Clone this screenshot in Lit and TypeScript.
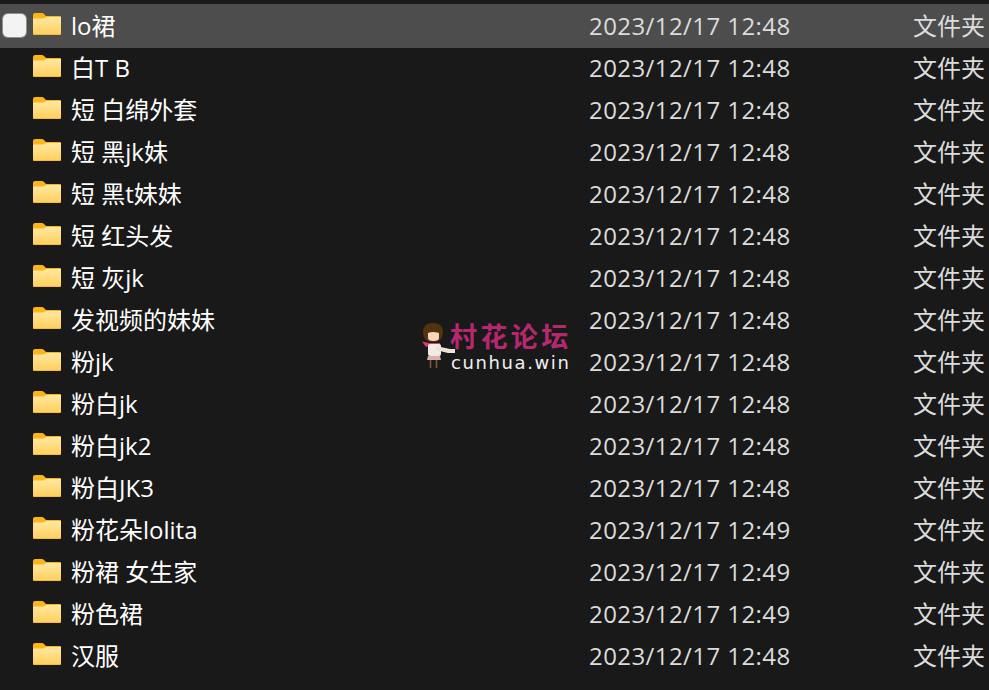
import { LitElement, html, css, svg } from "lit";
import { customElement } from "lit/decorators.js";

const rows: [string, string][] = [
  ["lo裙", "12:48"], ["白T B", "12:48"], ["短 白绵外套", "12:48"], ["短 黑jk妹", "12:48"],
  ["短 黑t妹妹", "12:48"], ["短 红头发", "12:48"], ["短 灰jk", "12:48"], ["发视频的妹妹", "12:48"],
  ["粉jk", "12:48"], ["粉白jk", "12:48"], ["粉白jk2", "12:48"], ["粉白JK3", "12:48"],
  ["粉花朵lolita", "12:49"], ["粉裙 女生家", "12:49"], ["粉色裙", "12:49"], ["汉服", "12:48"],
];

@customElement("app-root")
export class AppRoot extends LitElement {
  static styles = css`
    :host { display: block; width: 989px; height: 690px; overflow: hidden; position: relative; background: #191919; color: #fff;
      font-family: "Open Sans", "Noto Sans", "Noto Sans CJK SC", sans-serif; font-size: 24px; }
    .list { padding-top: 5px; }
    .row { display: grid; grid-template-columns: 33px 38px 518px 1fr; height: 42px; align-items: center; white-space: nowrap; }
    .row.sel { background: #4d4d4d; height: 44px; margin-top: -1px; margin-bottom: -1px; }
    .check { width: 23px; height: 23px; margin: -1px 0 0 3px; border-radius: 5px; background: #f3f3f3; box-shadow: 0 0 0 1px #8f8f8f; }
    svg.f { display: block; width: 28px; height: 22px; margin-top: -4px; }
    .name { color: #fff; line-height: 38px; }
    .rest { display: flex; justify-content: space-between; align-items: flex-start; padding-right: 4px; }
    .date { color: #dcdcdc; letter-spacing: 0.42px; line-height: 42px; }
    .type { color: #dcdcdc; line-height: 42px; }
    .mark { position: absolute; left: 420px; top: 320px; width: 152px; height: 54px; }
    .mark svg { position: absolute; left: 0; top: 0; width: 38px; height: 52px; }
    .mt { position: absolute; left: 30px; top: 4px; color: #b5286e; font-size: 27px; font-weight: 700; letter-spacing: 3.4px; line-height: 28px; font-family: "Liberation Sans", "Noto Sans CJK SC", sans-serif; }
    .mu { position: absolute; left: 31px; top: 33px; color: #f0f0f0; font-size: 18px; letter-spacing: 1.6px; line-height: 20px; font-family: "DejaVu Sans", sans-serif; }
  `;
  folder() {
    return svg`<svg class="f" viewBox="0 0 28 22"><defs><linearGradient id="g" x1="0" y1="0" x2="0" y2="1"><stop offset="0" stop-color="#ffe8a4"/><stop offset="1" stop-color="#ffcf58"/></linearGradient></defs>
      <path d="M0 2Q0 0 2 0H9Q10 0 11 1L13 3H27Q28 3 28 4V9H0Z" fill="#fbb516"/>
      <path d="M0 6.5Q0 5.5 1 5.5H9.5Q10.5 5.5 11.5 5L13.5 4H28V20.5Q28 22 26.5 22H1.5Q0 22 0 20.5Z" fill="url(#g)"/>
      <path d="M0 20.5Q0 22 1.5 22H26.5Q28 22 28 20.5" fill="none" stroke="#eea61e" stroke-width="1"/></svg>`;
  }
  render() {
    return html`<div class="list">
      ${rows.map((r, i) => html`<div class="row ${i === 0 ? "sel" : ""}">
        <div>${i === 0 ? html`<div class="check"></div>` : ""}</div>
        <div>${this.folder()}</div>
        <div class="name">${r[0]}</div>
        <div class="rest"><span class="date">2023/12/17 ${r[1]}</span><span class="type">文件夹</span></div>
      </div>`)}
    </div>
    <div class="mark">
      <svg viewBox="0 0 38 52">
        <path d="M13 22Q3 22 3 12Q3 3 13 3Q23 3 23 12Q23 22 13 22Z" fill="#54330f"/>
        <path d="M8 13Q13 11 19 13V18Q19 21 13.5 21Q8 21 8 18Z" fill="#f6d8b8"/>
        <path d="M2 21.5L9 23H20V25.5H10L6 27Z" fill="#dc3a74"/>
        <rect x="8" y="24" width="13" height="12" rx="2" fill="#f1ebe4"/>
        <path d="M16 26L30 29L35 29V33L28 33L16 30Z" fill="#ece4d6"/>
        <path d="M8 36H20L21 40H7Z" fill="#dcb0ac"/>
        <path d="M10.5 40V48M16.5 40V48" stroke="#7a5a32" stroke-width="1.6"/>
      </svg>
      <div class="mt">村花论坛</div>
      <div class="mu">cunhua.win</div>
    </div>`;
  }
}
